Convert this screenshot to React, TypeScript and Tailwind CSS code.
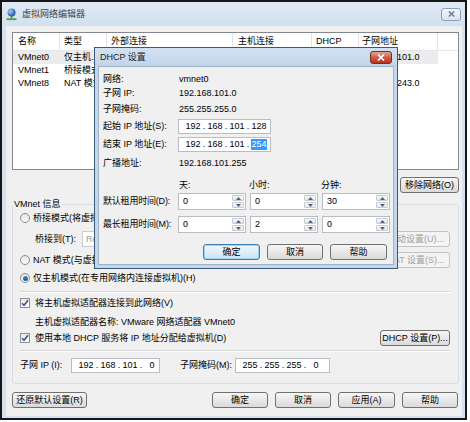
import React from 'react';

// Win7 basic 风格的小按钮
function Btn({
  label,
  w,
  disabled = false,
  primary = false,
}: {
  label: string;
  w: string;
  disabled?: boolean;
  primary?: boolean;
}) {
  return (
    <div
      className={`${w} h-[16px] shrink-0 rounded-[3px] border flex items-center justify-center whitespace-nowrap bg-linear-to-b ${
        disabled
          ? 'border-[#c2c2c2] from-[#f4f4f4] to-[#f4f4f4] text-[#a0a0a0]'
          : primary
          ? 'border-[#3c7fb1] from-[#eef6fc] to-[#cfe5f6] text-black shadow-[inset_0_0_0_1px_#a6d1ef]'
          : 'border-[#707070] from-[#f6f6f6] to-[#dadada] text-black'
      }`}
    >
      {label}
    </div>
  );
}

function IpText({ parts, sel }: { parts: string[]; sel?: number }) {
  return (
    <div className="flex items-center">
      {parts.map((p, i) => (
        <div key={i} className="flex items-center">
          <span className={`w-[16px] text-center ${sel === i ? 'bg-[#3399ff] text-white' : ''}`}>{p}</span>
          {i < 3 && <span className="w-[6px] text-center">.</span>}
        </div>
      ))}
    </div>
  );
}

function IpBox({ parts, w, sel }: { parts: string[]; w: string; sel?: number }) {
  return (
    <div className={`${w} h-[15px] shrink-0 border border-[#b9bcc3] bg-white flex items-center pl-[6px]`}>
      <IpText parts={parts} sel={sel} />
    </div>
  );
}

function Spin({ value }: { value: string }) {
  return (
    <div className="w-[68px] h-[17px] border border-[#b9bcc3] bg-white flex">
      <span className="flex-1 pl-[4px] pt-[2px]">{value}</span>
      <div className="w-[14px] flex flex-col gap-[1px] p-[1px]">
        {['up', 'down'].map((d) => (
          <div
            key={d}
            className="flex-1 rounded-[1px] border border-[#c7cbd1] bg-linear-to-b from-[#fafafa] to-[#e6e6e6] flex items-center justify-center"
          >
            <svg width="5" height="3" viewBox="0 0 5 3">
              <path d={d === 'up' ? 'M0 3 L2.5 0 L5 3 Z' : 'M0 0 L2.5 3 L5 0 Z'} fill="#4b5f80" />
            </svg>
          </div>
        ))}
      </div>
    </div>
  );
}

function Radio({ checked = false }: { checked?: boolean }) {
  return (
    <div className="w-[10px] h-[10px] shrink-0 rounded-full border border-[#8b8b8b] bg-linear-to-b from-[#e4e4e4] to-[#fdfdfd] flex items-center justify-center">
      {checked && <div className="w-[5px] h-[5px] rounded-full bg-linear-to-b from-[#3e8fd0] to-[#1a4f8a]" />}
    </div>
  );
}

function Check() {
  return (
    <div className="w-[10px] h-[10px] shrink-0 border border-[#8e8f8f] bg-linear-to-b from-[#e8e8e8] to-white flex items-center justify-center">
      <svg width="8" height="8" viewBox="0 0 8 8">
        <path d="M1 4.2 L3 6.3 L7 1.2" stroke="#384f8e" strokeWidth="1.5" fill="none" />
      </svg>
    </div>
  );
}

const cols = [
  { w: 'w-[47px]', pl: 'pl-[5px]' },
  { w: 'w-[47px]', pl: 'pl-[4px]' },
  { w: 'w-[126px]', pl: 'pl-[4px]' },
  { w: 'w-[79px]', pl: 'pl-[5px]' },
  { w: 'w-[47px]', pl: 'pl-[4px]' },
  { w: 'w-[79px]', pl: 'pl-[3px]' },
];

const header = ['名称', '类型', '外部连接', '主机连接', 'DHCP', '子网地址'];

const rows = [
  ['VMnet0', '仅主机…', '-', '已连接', '已启用', '192.168.101.0'],
  ['VMnet1', '桥接模式', '自动桥接', '-', '-', '-'],
  ['VMnet8', 'NAT 模式', 'NAT 模式', '已连接', '已启用', '192.168.243.0'],
];

// 网络列表
function NetTable() {
  return (
    <div className="h-[138px] border border-[#828790] bg-white overflow-hidden">
      <div className="h-[18px] flex border-b border-[#e3e6ea]">
        {header.map((h, i) => (
          <div key={h} className={`${cols[i].w} ${cols[i].pl} shrink-0 border-r border-[#dfe3e8] flex items-center`}>
            {h}
          </div>
        ))}
        <div className="flex-1" />
      </div>
      {rows.map((r, ri) => (
        <div key={r[0]} className="h-[13px] flex">
          {r.map((c, i) => (
            <div
              key={i}
              className={`${cols[i].w} ${cols[i].pl} shrink-0 flex items-center whitespace-nowrap ${
                ri === 0 ? 'bg-[#ececec]' : ''
              }`}
            >
              {c}
            </div>
          ))}
        </div>
      ))}
    </div>
  );
}

// DHCP 设置对话框
function DhcpDialog() {
  return (
    <div className="absolute left-[94px] top-[47px] w-[304px] h-[222px] border border-[#3a5a78] bg-[#c3d6eb] flex flex-col">
      <div className="h-[18px] flex items-center pl-[5px] pr-[5px] bg-linear-to-b from-[#d3e2f2] to-[#c0d4ea]">
        <span className="text-[#1e1e1e]">DHCP 设置</span>
        <div className="ml-auto w-[22px] h-[13px] rounded-[3px] border border-[#7a2a1f] bg-linear-to-b from-[#e6a396] via-[#d05a47] to-[#b7321f] flex items-center justify-center">
          <svg width="8" height="7" viewBox="0 0 8 7">
            <path d="M1 0.5 L7 6.5 M7 0.5 L1 6.5" stroke="white" strokeWidth="1.7" />
          </svg>
        </div>
      </div>
      <div className="flex-1 mx-[3px] mb-[3px] bg-[#f0f0f0] border border-[#9fb3c9] pl-[4px] pr-[6px] pt-[5px] flex flex-col">
        <div className="h-[14px] flex items-center">
          <span className="w-[75px] shrink-0">网络:</span>
          <span className="pl-[1px]">vmnet0</span>
        </div>
        <div className="h-[14px] flex items-center">
          <span className="w-[75px] shrink-0">子网 IP:</span>
          <span className="pl-[1px]">192.168.101.0</span>
        </div>
        <div className="h-[14px] mt-[2px] flex items-center">
          <span className="w-[75px] shrink-0">子网掩码:</span>
          <span className="pl-[1px]">255.255.255.0</span>
        </div>
        <div className="h-[15px] mt-[3px] flex items-center">
          <span className="w-[75px] shrink-0">起始 IP 地址(S):</span>
          <IpBox w="w-[93px]" parts={['192', '168', '101', '128']} />
        </div>
        <div className="h-[15px] mt-[3px] flex items-center">
          <span className="w-[75px] shrink-0">结束 IP 地址(E):</span>
          <IpBox w="w-[93px]" parts={['192', '168', '101', '254']} sel={3} />
        </div>
        <div className="h-[14px] mt-[4px] flex items-center">
          <span className="w-[75px] shrink-0">广播地址:</span>
          <span className="pl-[1px]">192.168.101.255</span>
        </div>
        <div className="h-[12px] mt-[9px] flex items-center pl-[75px] gap-[4px]">
          <span className="w-[68px] pl-[1px]">天:</span>
          <span className="w-[68px]">小时:</span>
          <span className="w-[68px] pl-[1px]">分钟:</span>
        </div>
        <div className="h-[17px] mt-[2px] flex items-center">
          <span className="w-[75px] shrink-0 whitespace-nowrap tracking-[-0.2px]">默认租用时间(D):</span>
          <div className="flex gap-[4px]">
            <Spin value="0" />
            <Spin value="0" />
            <Spin value="30" />
          </div>
        </div>
        <div className="h-[17px] mt-[6px] flex items-center">
          <span className="w-[75px] shrink-0 whitespace-nowrap tracking-[-0.2px]">最长租用时间(M):</span>
          <div className="flex gap-[4px]">
            <Spin value="0" />
            <Spin value="2" />
            <Spin value="0" />
          </div>
        </div>
        <div className="mt-[11px] flex justify-end gap-[7px]">
          <Btn label="确定" w="w-[57px]" primary />
          <Btn label="取消" w="w-[56px]" />
          <Btn label="帮助" w="w-[57px]" />
        </div>
      </div>
    </div>
  );
}

function Separator() {
  return <div className="h-[2px] border-t border-[#d5d5d5] border-b border-b-white" />;
}

export default function App() {
  return (
    <div className="relative w-[470px] h-[422px] bg-white text-[9px] leading-[11px] text-black font-['Liberation_Sans','Noto_Sans_CJK_SC',sans-serif]">
      <div className="w-[467px] h-[420px] border-2 border-[#161616] bg-[#d6e2ef] flex flex-col">
        {/* 标题栏 */}
        <div className="h-[24px] flex items-center pl-[4px] pr-[3px] bg-linear-to-b from-[#dfe9f4] to-[#d3e0ee]">
          <svg width="11" height="13" viewBox="0 0 11 13">
            <defs>
              <radialGradient id="ball" cx="0.35" cy="0.35" r="0.7">
                <stop offset="0" stopColor="#9fd0ff" />
                <stop offset="1" stopColor="#1d4f9e" />
              </radialGradient>
            </defs>
            <circle cx="5.5" cy="4.5" r="4" fill="url(#ball)" />
            <rect x="4.7" y="8" width="1.6" height="2.6" fill="#3f8f2f" />
            <rect x="0.5" y="10.3" width="10" height="1.8" fill="#4aa63a" />
          </svg>
          <span className="ml-[5px] text-[#454545]">虚拟网络编辑器</span>
          <div className="ml-auto mr-[1px] w-[20px] h-[13px] rounded-[3px] border border-[#8c9fb7] bg-linear-to-b from-[#f4f7fb] to-[#d9e3ee] flex items-center justify-center">
            <svg width="7" height="6" viewBox="0 0 7 6">
              <path d="M0.8 0.5 L6.2 5.5 M6.2 0.5 L0.8 5.5" stroke="#6c7d92" strokeWidth="1.5" />
            </svg>
          </div>
        </div>

        {/* 主体 */}
        <div className="flex-1 ml-[4px] mr-[3px] mb-[2px] bg-[#f0f0f0] pl-[6px] pr-[3px] pt-[6px] flex flex-col">
          <NetTable />

          <div className="mt-[7px] flex justify-end gap-[6px]">
            <Btn label="添加网络(E)..." w="w-[60px]" />
            <Btn label="移除网络(O)" w="w-[59px]" />
          </div>

          {/* VMnet 信息 */}
          <div className="relative mt-[11px] border border-[#d5dfe5] rounded-[3px] pl-[7px] pr-[8px] pt-[5px] pb-[10px] flex flex-col">
            <span className="absolute -top-[6px] left-[0px] bg-[#f0f0f0] px-[1px]">VMnet 信息</span>

            <div className="h-[16px] flex items-center gap-[3px]">
              <Radio />
              <span>桥接模式(将虚拟机直接连接到外部网络)(B)</span>
            </div>
            <div className="h-[16px] mt-[5px] flex items-center justify-between">
              <div className="flex items-center pl-[15px]">
                <span className="w-[47px]">桥接到(T):</span>
                <div className="w-[280px] h-[16px] border border-[#c9ccd1] bg-white flex items-center pl-[3px] text-[#9a9a9a]">
                  Realtek PCIe GBE Family Controller
                </div>
              </div>
              <Btn label="自动设置(U)..." w="w-[68px]" disabled />
            </div>
            <div className="h-[16px] mt-[5px] flex items-center justify-between">
              <div className="flex items-center gap-[3px]">
                <Radio />
                <span>NAT 模式(与虚拟机共享主机的 IP 地址)(N)</span>
              </div>
              <Btn label="NAT 设置(S)..." w="w-[68px]" disabled />
            </div>
            <div className="h-[16px] mt-[2px] flex items-center gap-[3px]">
              <Radio checked />
              <span>仅主机模式(在专用网络内连接虚拟机)(H)</span>
            </div>

            <div className="mt-[5px]">
              <Separator />
            </div>

            <div className="h-[16px] mt-[2px] flex items-center gap-[5px]">
              <Check />
              <span>将主机虚拟适配器连接到此网络(V)</span>
            </div>
            <div className="h-[16px] mt-[3px] flex items-center pl-[15px]">
              主机虚拟适配器名称: VMware 网络适配器 VMnet0
            </div>
            <div className="h-[16px] flex items-center justify-between">
              <div className="flex items-center gap-[5px]">
                <Check />
                <span>使用本地 DHCP 服务将 IP 地址分配给虚拟机(D)</span>
              </div>
              <Btn label="DHCP 设置(P)..." w="w-[70px]" />
            </div>

            <div className="mt-[4px]">
              <Separator />
            </div>

            <div className="h-[16px] mt-[5px] flex items-center">
              <span className="w-[51px]">子网 IP (I):</span>
              <IpBox w="w-[89px]" parts={['192', '168', '101', '0']} />
              <span className="ml-[20px] w-[55px]">子网掩码(M):</span>
              <IpBox w="w-[95px]" parts={['255', '255', '255', '0']} />
            </div>
          </div>

          {/* 底部按钮 */}
          <div className="mt-[8px] pr-[1px] flex items-center">
            <Btn label="还原默认设置(R)" w="w-[75px]" />
            <div className="ml-auto flex gap-[7px]">
              <Btn label="确定" w="w-[56px]" />
              <Btn label="取消" w="w-[56px]" />
              <Btn label="应用(A)" w="w-[57px]" />
              <Btn label="帮助" w="w-[56px]" />
            </div>
          </div>
        </div>
      </div>

      <DhcpDialog />
    </div>
  );
}
